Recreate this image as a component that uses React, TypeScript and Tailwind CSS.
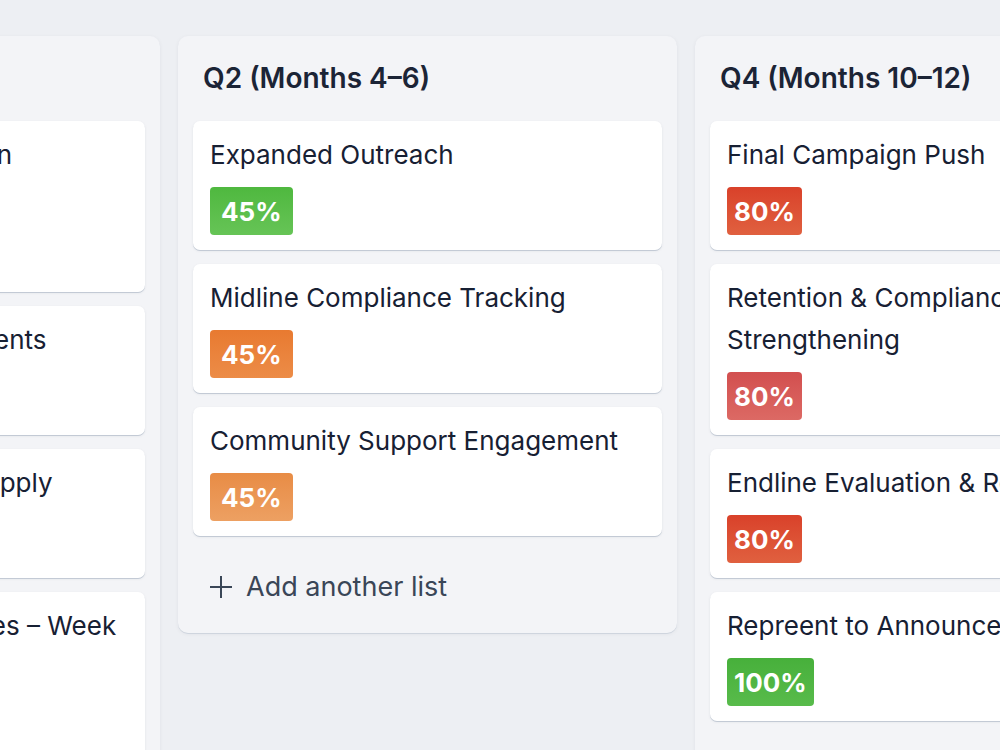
interface Card {
  title: string
  progress: number
  badge: string
  tight?: boolean
}

interface List {
  id: string
  name: string
  cards: Card[]
}

// Badge colours are picked per card, so every class is spelled out here
const BADGE = {
  green: 'bg-gradient-to-b from-[#4fb83f] to-[#66c456]',
  greenDeep: 'bg-gradient-to-b from-[#47b03b] to-[#58bb4b]',
  orange: 'bg-gradient-to-b from-[#e87a30] to-[#ec8c47]',
  orangeSoft: 'bg-gradient-to-b from-[#e88c45] to-[#eda062]',
  red: 'bg-gradient-to-b from-[#d9412a] to-[#e0603f]',
  rose: 'bg-gradient-to-b from-[#d24f4f] to-[#dc6964]',
}

const LISTS: List[] = [
  {
    id: 'q1',
    name: 'Q1 (Months 1–3)',
    cards: [
      { title: 'Health Worker Orientation Workshops', progress: 20, badge: BADGE.green },
      { title: 'Caregiver Group Enrollments', progress: 20, badge: BADGE.green },
      { title: 'Procurements & Initial Supply', progress: 20, badge: BADGE.orange },
      { title: 'Field Distribution Activities – Week 1', progress: 20, badge: BADGE.orange },
    ],
  },
  {
    id: 'q2',
    name: 'Q2 (Months 4–6)',
    cards: [
      { title: 'Expanded Outreach', progress: 45, badge: BADGE.green },
      { title: 'Midline Compliance Tracking', progress: 45, badge: BADGE.orange },
      { title: 'Community Support Engagement', progress: 45, badge: BADGE.orangeSoft },
    ],
  },
  {
    id: 'q4',
    name: 'Q4 (Months 10–12)',
    cards: [
      { title: 'Final Campaign Push', progress: 80, badge: BADGE.red, tight: true },
      { title: 'Retention & Compliance Strengthening', progress: 80, badge: BADGE.rose, tight: true },
      { title: 'Endline Evaluation & Reporting', progress: 80, badge: BADGE.red, tight: true },
      { title: 'Repreent to Announcements', progress: 100, badge: BADGE.greenDeep, tight: true },
    ],
  },
]

function TaskCard({ card }: { card: Card }) {
  return (
    <div className="rounded-[7px] bg-white px-[17px] pt-[13px] pb-[15px] shadow-[0_1px_0_#c3cad5,0_1px_3px_rgba(30,41,59,0.08)]">
      <p className="text-[26px] leading-[42px] text-[#172033]">{card.title}</p>
      <span
        className={`mt-[11px] inline-flex h-[48px] items-center rounded-[4px] text-[26px] font-bold text-white ${
          card.tight ? 'px-[7px]' : 'px-[11px]'
        } ${card.badge}`}
      >
        {card.progress}%
      </span>
    </div>
  )
}

function ListColumn({ list }: { list: List }) {
  return (
    <div className="w-[499px] shrink-0 rounded-[10px] bg-[#f3f4f7] px-[15px] pt-[24px] pb-[25px] shadow-[0_1px_0_#cfd5de,0_1px_4px_rgba(30,41,59,0.06)]">
      <h2 className="h-[36px] px-[10px] text-[28px] font-semibold leading-[36px] text-[#1b2436]">
        {list.name}
      </h2>
      <div className="mt-[25px] flex flex-col gap-[14px]">
        {list.cards.map((card) => (
          <TaskCard key={card.title} card={card} />
        ))}
      </div>
      <button className="mt-[30px] flex h-[42px] items-center gap-[14px] px-[17px] text-[27px] text-[#3a4657]">
        <svg className="h-[22px] w-[22px]" viewBox="0 0 22 22" fill="none" stroke="currentColor" strokeWidth={2}>
          <path d="M11 0v22M0 11h22" />
        </svg>
        Add another list
      </button>
    </div>
  )
}

export default function App() {
  return (
    <div className="h-[750px] w-[1000px] overflow-hidden bg-[#edeff3] font-['Inter',sans-serif]">
      {/* board is scrolled sideways, first list partly off screen */}
      <div className="ml-[-339px] flex items-start gap-[18px] pt-[36px]">
        {LISTS.map((list) => (
          <ListColumn key={list.id} list={list} />
        ))}
      </div>
    </div>
  )
}
